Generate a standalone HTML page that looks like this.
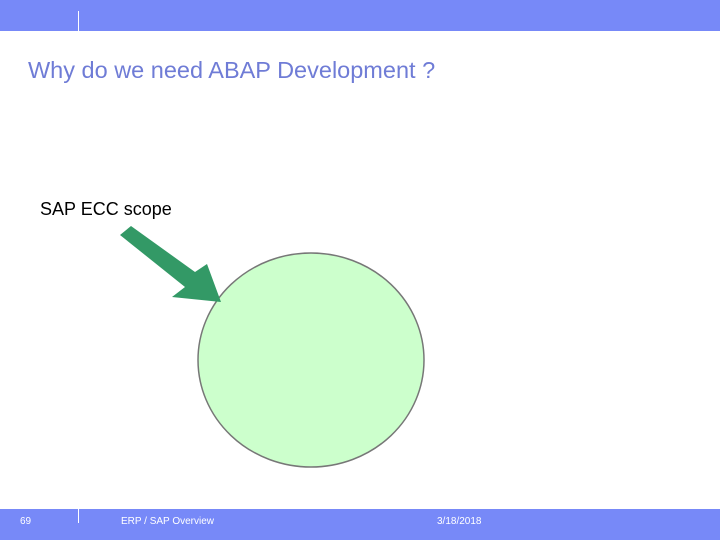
<!DOCTYPE html>
<html><head><style>
body{margin:0;width:720px;height:540px;position:relative;background:#fff;font-family:"Liberation Sans",sans-serif;overflow:hidden}
.bar{position:absolute;left:0;width:720px;background:#7789f8}
.t{position:absolute;white-space:nowrap}
</style></head><body>
<div class="bar" style="top:0;height:31px"></div>
<div style="position:absolute;left:78px;top:11px;width:1px;height:20px;background:#fff"></div>
<div class="bar" style="top:509px;height:31px"></div>
<div style="position:absolute;left:78px;top:503px;width:1px;height:20px;background:#fff"></div>
<div class="t" style="left:28px;top:57px;font-size:23.5px;color:#6f7cd6">Why do we need ABAP Development ?</div>
<div class="t" style="left:40px;top:199px;font-size:18px;color:#000">SAP ECC scope</div>
<svg width="720" height="540" style="position:absolute;left:0;top:0">
<ellipse cx="311" cy="360" rx="113" ry="107" fill="#ccffcc" stroke="#777" stroke-width="1.5"/>
<polygon points="120,235 131,226 195,272 207,264 221,302 172,297 185,287" fill="#339966"/>
</svg>
<div class="t" style="left:20px;top:516px;font-size:10px;color:#fff">69</div>
<div class="t" style="left:121px;top:516px;font-size:10px;color:#fff">ERP / SAP Overview</div>
<div class="t" style="left:437px;top:516px;font-size:10px;color:#fff">3/18/2018</div>
</body></html>
